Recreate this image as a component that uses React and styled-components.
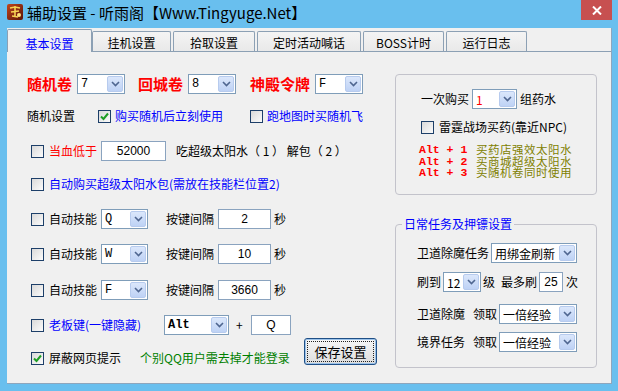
import React from "react";
import styled, { createGlobalStyle } from "styled-components";

//global
const GlobalStyle = createGlobalStyle`
    html, body {
        margin:0;
        padding:0;
    }
    body {
        font-family:"Noto Sans CJK SC", "Noto Sans", sans-serif;
        font-size:12px;
        color:#000;
    }
`

//window frame
const Window = styled.div`
    width:618px;
    height:391px;
    background-color:#69bfee;
    display:flex;
    flex-direction:column;
    overflow:hidden;
`

const TitleBar = styled.div`
    height:28px;
    flex-shrink:0;
    display:flex;
    align-items:flex-start;
`

const AppIcon = styled.svg`
    margin:4px 0 0 7px;
    flex-shrink:0;
`

const Title = styled.div`
    font-size:15px;
    line-height:20px;
    margin:3px 0 0 4px;
    white-space:nowrap;
`

const CloseButton = styled.div`
    margin-left:auto;
    margin-right:6px;
    width:31px;
    height:20px;
    background-color:#c75050;
    display:flex;
    align-items:center;
    justify-content:center;
`

const Client = styled.div`
    flex:1;
    margin:0 6px 7px 7px;
    background-color:#f0f0f0;
    border-right:1px solid #8ea6bd;
    border-bottom:1px solid #8ea6bd;
    display:flex;
    flex-direction:column;
`

//tabs
const TabStrip = styled.div`
    height:23px;
    flex-shrink:0;
    display:flex;
    align-items:flex-end;
`

const Tab = styled.div`
    position:relative;
    z-index:1;
    box-sizing:border-box;
    width:${p => p.w}px;
    margin-left:${p => p.ml || 0}px;
    height:${p => p.active ? 23 : 20}px;
    margin-bottom:${p => p.active ? -1 : 0}px;
    padding-top:${p => p.active ? 5 : 2}px;
    line-height:17px;
    text-align:center;
    border:1px solid #8ca0b4;
    border-bottom:none;
    border-radius:2px 2px 0 0;
    color:${p => p.active ? "#0000ff" : "#000"};
    background:${p => p.active ? "#f0f0f0" : "linear-gradient(#f4f4f4, #e9e9e9)"};
`

const Panel = styled.div`
    flex:1;
    border-top:1px solid #8ca0b4;
    display:flex;
    padding:22px 0 0 20px;
`

//columns
const LeftCol = styled.div`
    width:368px;
    display:flex;
    flex-direction:column;
`

const RightCol = styled.div`
    width:202px;
    display:flex;
    flex-direction:column;
`

const Row = styled.div`
    display:flex;
    align-items:center;
    height:${p => p.h || 20}px;
    margin-top:${p => p.mt || 0}px;
    padding-left:${p => p.indent || 0}px;
    white-space:nowrap;
`

const Label = styled.span`
    margin-left:${p => p.ml || 0}px;
    color:${p => p.color || "#000"};
    width:${p => p.w ? p.w + "px" : "auto"};
    flex-shrink:0;
    line-height:16px;
`

const BigLabel = styled.span`
    margin-left:${p => p.ml || 0}px;
    color:#ff0000;
    font-size:15px;
    font-weight:700;
    line-height:18px;
`

//checkbox
const CheckBox = styled.span`
    box-sizing:border-box;
    width:13px;
    height:13px;
    margin-left:${p => p.ml || 0}px;
    flex-shrink:0;
    border:1px solid #1d3f69;
    background:linear-gradient(135deg, #d9d9d9, #fbfbfb);
    display:flex;
    align-items:center;
    justify-content:center;
`

function Check({ checked, ml }) {
    return (
        <CheckBox ml={ml}>
            {checked && (
                <svg width="11" height="11" viewBox="0 0 11 11">
                    <path d="M2 5.5 L4.5 8 L9 2.5" fill="none" stroke="#1e9e25" strokeWidth="2" />
                </svg>
            )}
        </CheckBox>
    )
}

//combo box
const SelectBox = styled.div`
    box-sizing:border-box;
    width:${p => p.w}px;
    height:20px;
    margin-left:${p => p.ml || 0}px;
    flex-shrink:0;
    border:1px solid #7f9db9;
    background-color:#fff;
    display:flex;
    align-items:stretch;
`

const SelectValue = styled.span`
    flex:1;
    padding-left:3px;
    display:flex;
    align-items:center;
    overflow:hidden;
    color:${p => p.color || "#000"};
    font-family:${p => p.mono ? "\"Liberation Mono\", monospace" : "inherit"};
    font-weight:${p => p.bold ? 700 : 400};
    font-size:12px;
`

const SelectArrow = styled.span`
    box-sizing:border-box;
    width:16px;
    margin:1px;
    border:1px solid #b7cbee;
    border-radius:2px;
    background:linear-gradient(#dbe7fb, #bed2f5);
    display:flex;
    align-items:center;
    justify-content:center;
`

function Select({ w, ml, value, mono, bold, color }) {
    return (
        <SelectBox w={w} ml={ml}>
            <SelectValue mono={mono} bold={bold} color={color}>{value}</SelectValue>
            <SelectArrow>
                <svg width="9" height="6" viewBox="0 0 9 6">
                    <path d="M1 1 L4.5 4.5 L8 1" fill="none" stroke="#4f6690" strokeWidth="1.6" />
                </svg>
            </SelectArrow>
        </SelectBox>
    )
}

const Field = styled.div`
    box-sizing:border-box;
    width:${p => p.w}px;
    height:20px;
    margin-left:${p => p.ml || 0}px;
    flex-shrink:0;
    border:1px solid #8aa3bf;
    background-color:#fff;
    display:flex;
    align-items:center;
    justify-content:center;
    font-family:"Liberation Sans", sans-serif;
    font-size:12px;
`

//save button
const SaveButton = styled.div`
    box-sizing:border-box;
    width:73px;
    height:27px;
    margin-left:${p => p.ml || 0}px;
    margin-top:-10px;
    align-self:flex-start;
    flex-shrink:0;
    padding:2px;
    border:1px solid #1f4f86;
    border-radius:3px;
    background:linear-gradient(#f7f7f7, #dddddd);
    box-shadow:inset 0 0 0 1px #9cc3ea;
    display:flex;
`

const FocusRect = styled.span`
    flex:1;
    border:1px dotted #222;
    display:flex;
    align-items:center;
    justify-content:center;
    font-size:13px;
`

//group boxes
const GroupBox = styled.div`
    box-sizing:border-box;
    height:121px;
    border:1px solid #c3c3cb;
    border-radius:4px;
    padding-left:25px;
    display:flex;
    flex-direction:column;
`

const HotkeyList = styled.div`
    display:grid;
    grid-template-columns:57px auto;
    grid-auto-rows:11.5px;
    margin:7px 0 0 -2px;
    line-height:11.5px;
`

const HotkeyKey = styled.span`
    font-family:"Liberation Mono", monospace;
    font-weight:700;
    font-size:11.5px;
    color:#ff0000;
    white-space:pre;
`

const HotkeyText = styled.span`
    color:#808000;
    font-size:11.5px;
    letter-spacing:0.5px;
`

const FieldSet = styled.fieldset`
    box-sizing:border-box;
    margin:21px 0 0 0;
    padding:0 0 0 21px;
    min-width:0;
    height:152px;
    border:1px solid #c3c3cb;
    border-radius:4px;
    display:flex;
    flex-direction:column;
`

const Legend = styled.legend`
    margin-left:-15px;
    padding:0 2px;
    line-height:16px;
    color:#0000ff;
    font-size:12px;
`

const tabs = [
    { name: "基本设置", w: 85, ml: 0, active: true },
    { name: "挂机设置", w: 79, ml: 0 },
    { name: "拾取设置", w: 82, ml: 2 },
    { name: "定时活动喊话", w: 104, ml: 2 },
    { name: "BOSS计时", w: 81, ml: 2 },
    { name: "运行日志", w: 81, ml: 2 },
];

const skills = [
    { key: "Q", gap: "2", mt: 15 },
    { key: "W", gap: "10", mt: 15 },
    { key: "F", gap: "3660", mt: 16 },
];

const hotkeys = [
    { key: "Alt + 1", text: "买药店强效太阳水" },
    { key: "Alt + 2", text: "买商城超级太阳水" },
    { key: "Alt + 3", text: "买随机卷同时使用" },
];

function App() {

    return (
        <Window>
            <GlobalStyle />

            <TitleBar>
                <AppIcon width="16" height="16" viewBox="0 0 16 16">
                    <defs>
                        <linearGradient id="ic" x1="0" y1="0" x2="1" y2="1">
                            <stop offset="0" stopColor="#c0461c" />
                            <stop offset="1" stopColor="#5a1408" />
                        </linearGradient>
                    </defs>
                    <rect x="0" y="0" width="16" height="16" rx="2" fill="url(#ic)" />
                    <path d="M3 4 L8 3 L13 4 M8 2 L8 13 M4 8 L12 7 M5 12 L11 13" stroke="#f6d253" strokeWidth="1.6" fill="none" />
                    <circle cx="12" cy="11" r="2" fill="#ffe37a" />
                </AppIcon>
                <Title>辅助设置 - 听雨阁【Www.Tingyuge.Net】</Title>
                <CloseButton>
                    <svg width="10" height="9" viewBox="0 0 10 9">
                        <path d="M1 0.5 L9 8.5 M9 0.5 L1 8.5" stroke="#fff" strokeWidth="2" />
                    </svg>
                </CloseButton>
            </TitleBar>

            <Client>
                <TabStrip>
                    {tabs.map((t) => (
                        <Tab key={t.name} w={t.w} ml={t.ml} active={t.active}>{t.name}</Tab>
                    ))}
                </TabStrip>

                <Panel>
                    <LeftCol>
                        <Row>
                            <BigLabel>随机卷</BigLabel>
                            <Select w={48} ml={5} value="7" mono />
                            <BigLabel ml={13}>回城卷</BigLabel>
                            <Select w={48} ml={5} value="8" mono />
                            <BigLabel ml={14}>神殿令牌</BigLabel>
                            <Select w={48} ml={5} value="F" mono />
                        </Row>

                        <Row mt={12}>
                            <Label>随机设置</Label>
                            <Check ml={23} checked />
                            <Label ml={4} color="#0000ff">购买随机后立刻使用</Label>
                            <Check ml={27} />
                            <Label ml={4} color="#0000ff">跑地图时买随机飞</Label>
                        </Row>

                        <Row mt={15} indent={4}>
                            <Check />
                            <Label ml={5} color="#ff0000">当血低于</Label>
                            <Field w={65} ml={4}>52000</Field>
                            <Label ml={10}>吃超级太阳水（ 1 ） 解包（ 2 ）</Label>
                        </Row>

                        <Row mt={13} indent={4}>
                            <Check />
                            <Label ml={5} color="#0000ff">自动购买超级太阳水包(需放在技能栏位置2)</Label>
                        </Row>

                        {skills.map((s) => (
                            <Row key={s.key} mt={s.mt} indent={4}>
                                <Check />
                                <Label ml={5}>自动技能</Label>
                                <Select w={47} ml={4} value={s.key} mono />
                                <Label ml={18}>按键间隔</Label>
                                <Field w={53} ml={4}>{s.gap}</Field>
                                <Label ml={3}>秒</Label>
                            </Row>
                        ))}

                        <Row mt={15} indent={4}>
                            <Check />
                            <Label ml={5} w={96} color="#0000ff">老板键(一键隐藏)</Label>
                            <Select w={65} ml={19} value="Alt" mono bold />
                            <Label ml={7} w={7}>+</Label>
                            <Field w={40} ml={8}>Q</Field>
                        </Row>

                        <Row mt={13} indent={4}>
                            <Check checked />
                            <Label ml={5}>屏蔽网页提示</Label>
                            <Label ml={19} w={144} color="#008000">个别QQ用户需去掉才能登录</Label>
                            <SaveButton ml={20}>
                                <FocusRect>保存设置</FocusRect>
                            </SaveButton>
                        </Row>
                    </LeftCol>

                    <RightCol>
                        <GroupBox>
                            <Row mt={14}>
                                <Label>一次购买</Label>
                                <Select w={45} ml={3} value="1" color="#ff0000" />
                                <Label ml={3}>组药水</Label>
                            </Row>
                            <Row mt={8}>
                                <Check />
                                <Label ml={5}>雷霆战场买药(靠近NPC)</Label>
                            </Row>
                            <HotkeyList>
                                {hotkeys.map((h) => (
                                    <React.Fragment key={h.key}>
                                        <HotkeyKey>{h.key}</HotkeyKey>
                                        <HotkeyText>{h.text}</HotkeyText>
                                    </React.Fragment>
                                ))}
                            </HotkeyList>
                        </GroupBox>

                        <FieldSet>
                            <Legend>日常任务及押镖设置</Legend>
                            <Row mt={11}>
                                <Label>卫道除魔任务</Label>
                                <Select w={86} ml={2} value="用绑金刷新" />
                            </Row>
                            <Row mt={9}>
                                <Label>刷到</Label>
                                <Select w={38} ml={2} value="12" />
                                <Label ml={2}>级</Label>
                                <Label ml={6}>最多刷</Label>
                                <Field w={24} ml={2}>25</Field>
                                <Label ml={3}>次</Label>
                            </Row>
                            <Row mt={12}>
                                <Label>卫道除魔</Label>
                                <Label ml={8}>领取</Label>
                                <Select w={78} ml={2} value="一倍经验" />
                            </Row>
                            <Row mt={8}>
                                <Label>境界任务</Label>
                                <Label ml={8}>领取</Label>
                                <Select w={78} ml={2} value="一倍经验" />
                            </Row>
                        </FieldSet>
                    </RightCol>
                </Panel>
            </Client>
        </Window>
    )
}

export default App;
